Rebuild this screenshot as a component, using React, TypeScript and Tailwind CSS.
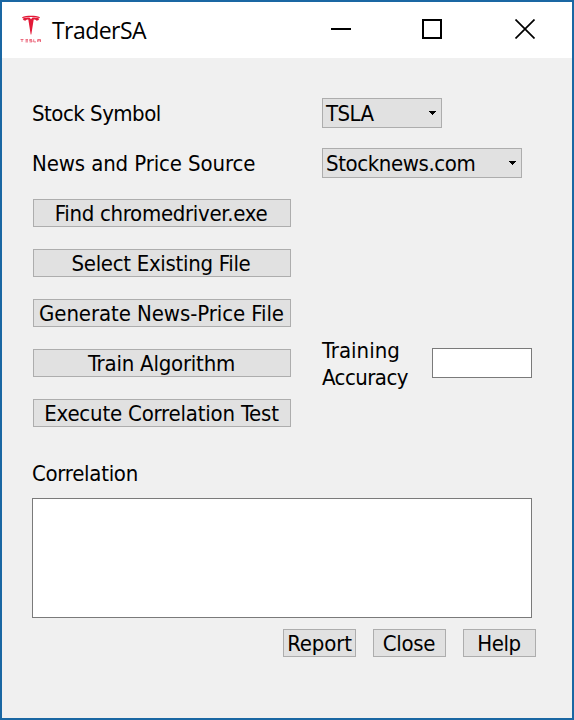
import React from "react";

function TeslaLogo() {
  return (
    <svg width="24" height="30" viewBox="0 0 24 30" className="shrink-0">
      <g fill="#e31937">
        <path d="M2 2.2C6.500 .4 15.500 .4 20 2.200L19.500 3C15 1.500 7 1.500 2.500 3Z" />
        <path d="M2.600 3.700C5 2.900 7.500 2.600 9.500 2.600L11 4.300L12.500 2.600C14.500 2.600 17 2.900 19.400 3.700C18.800 5 17.800 5.600 16.500 5.700C16 4.900 14.800 4.600 13.700 4.600L11.300 19.500H10.700L8.300 4.600C7.200 4.600 6 4.900 5.500 5.700C4.200 5.600 3.200 5 2.600 3.700Z" />
      </g>
      <g stroke="#e31937" strokeWidth=".7" fill="none" opacity=".85">
        <path d="M.5 24.500H3.500M2 24.500V27M5.500 24.500H8M5.500 25.700H8M5.500 26.900H8M12 24.500H9.700V25.700H12V26.900H9.500M13.700 24.300V26.900H16M17.700 27V24.500H20.500V27M17.700 25.800H20.500" />
      </g>
    </svg>
  );
}

function Button({ children, className }: { children: React.ReactNode; className: string }) {
  return (
    <button className={`flex h-7 items-center justify-center whitespace-nowrap border border-[#adadad] bg-[#e1e1e1] ${className}`}>
      {children}
    </button>
  );
}

function Select({ children, className }: { children: React.ReactNode; className: string }) {
  return (
    <div className={`flex h-[30px] items-center justify-between border border-[#adadad] bg-[#e1e1e1] pl-[3px] pr-[5px] ${className}`}>
      {children}
      <svg width="7" height="4" viewBox="0 0 7 4" shapeRendering="crispEdges">
        <path d="M0 0H7V1H6V2H5V3H4V4H3V3H2V2H1V1H0Z" />
      </svg>
    </div>
  );
}

export default function App() {
  return (
    <div className="flex h-[720px] w-[574px] flex-col border-2 border-[#1a67a3] bg-[#f0f0f0] font-['DejaVu_Sans_Condensed','DejaVu_Sans',sans-serif] text-[22px] leading-[27px] text-black [font-stretch:condensed]">
      <header className="flex h-14 items-center bg-white pl-[18px]">
        <TeslaLogo />
        <h1 className="ml-2 w-[279px] font-['Open_Sans',sans-serif] text-[23px] leading-8 tracking-[-0.550px] [font-stretch:normal]">TraderSA</h1>
        <svg width="20" height="20" className="mb-0.5 shrink-0"><path d="M0 9H20V11H0Z" /></svg>
        <svg width="20" height="20" className="mb-0.5 ml-[71px] shrink-0"><path d="M1 1H19V19H1Z" fill="none" stroke="#000" strokeWidth="2" /></svg>
        <svg width="20" height="20" className="mb-0.5 ml-[73px] shrink-0"><path d="M.5 .5L19.500 19.500M19.500 .5L.5 19.500" stroke="#000" strokeWidth="1.700" /></svg>
      </header>
      <main className="px-[30px] pt-10">
        <div className="flex h-[30px] items-center">
          <label className="w-[290px] tracking-[-0.500px]">Stock Symbol</label>
          <Select className="w-[120px] tracking-[-0.600px]">TSLA</Select>
        </div>
        <div className="mt-5 flex h-[30px] items-center">
          <label className="w-[290px] tracking-[-0.120px]">News and Price Source</label>
          <Select className="w-[200px] tracking-[-0.400px]">Stocknews.com</Select>
        </div>
        <div className="mt-[21px] flex">
          <div className="ml-px flex flex-col gap-[22px]">
            <Button className="w-[258px] pr-0.5 tracking-[-0.300px]">Find chromedriver.exe</Button>
            <Button className="w-[258px] pr-0.5 tracking-[-0.300px]">Select Existing File</Button>
            <Button className="w-[258px] pr-px tracking-[-0.080px]">Generate News-Price File</Button>
            <Button className="w-[258px] pr-px tracking-[-0.220px]">Train Algorithm</Button>
            <Button className="w-[258px] pr-px tracking-[-0.200px]">Execute Correlation Test</Button>
          </div>
          <div className="ml-[31px] mt-[138px] flex h-[54px] items-start">
            <label className="w-[110px]">Training<br /><span className="tracking-[-0.550px]">Accuracy</span></label>
            <input className="mt-[11px] h-[30px] w-[100px] border border-[#7a7a7a] bg-white" />
          </div>
        </div>
        <div className="mt-[33px] h-[27px] tracking-[-0.280px]">Correlation</div>
        <textarea className="mt-[11px] block h-[120px] w-[500px] resize-none border border-[#7a7a7a] bg-white" />
        <div className="ml-[251px] mt-[11px] flex gap-[17px]">
          <Button className="w-[73px] tracking-[-0.150px]">Report</Button>
          <Button className="w-[73px] pr-px tracking-[-0.300px]">Close</Button>
          <Button className="w-[73px] pr-px tracking-[-0.400px]">Help</Button>
        </div>
      </main>
    </div>
  );
}
